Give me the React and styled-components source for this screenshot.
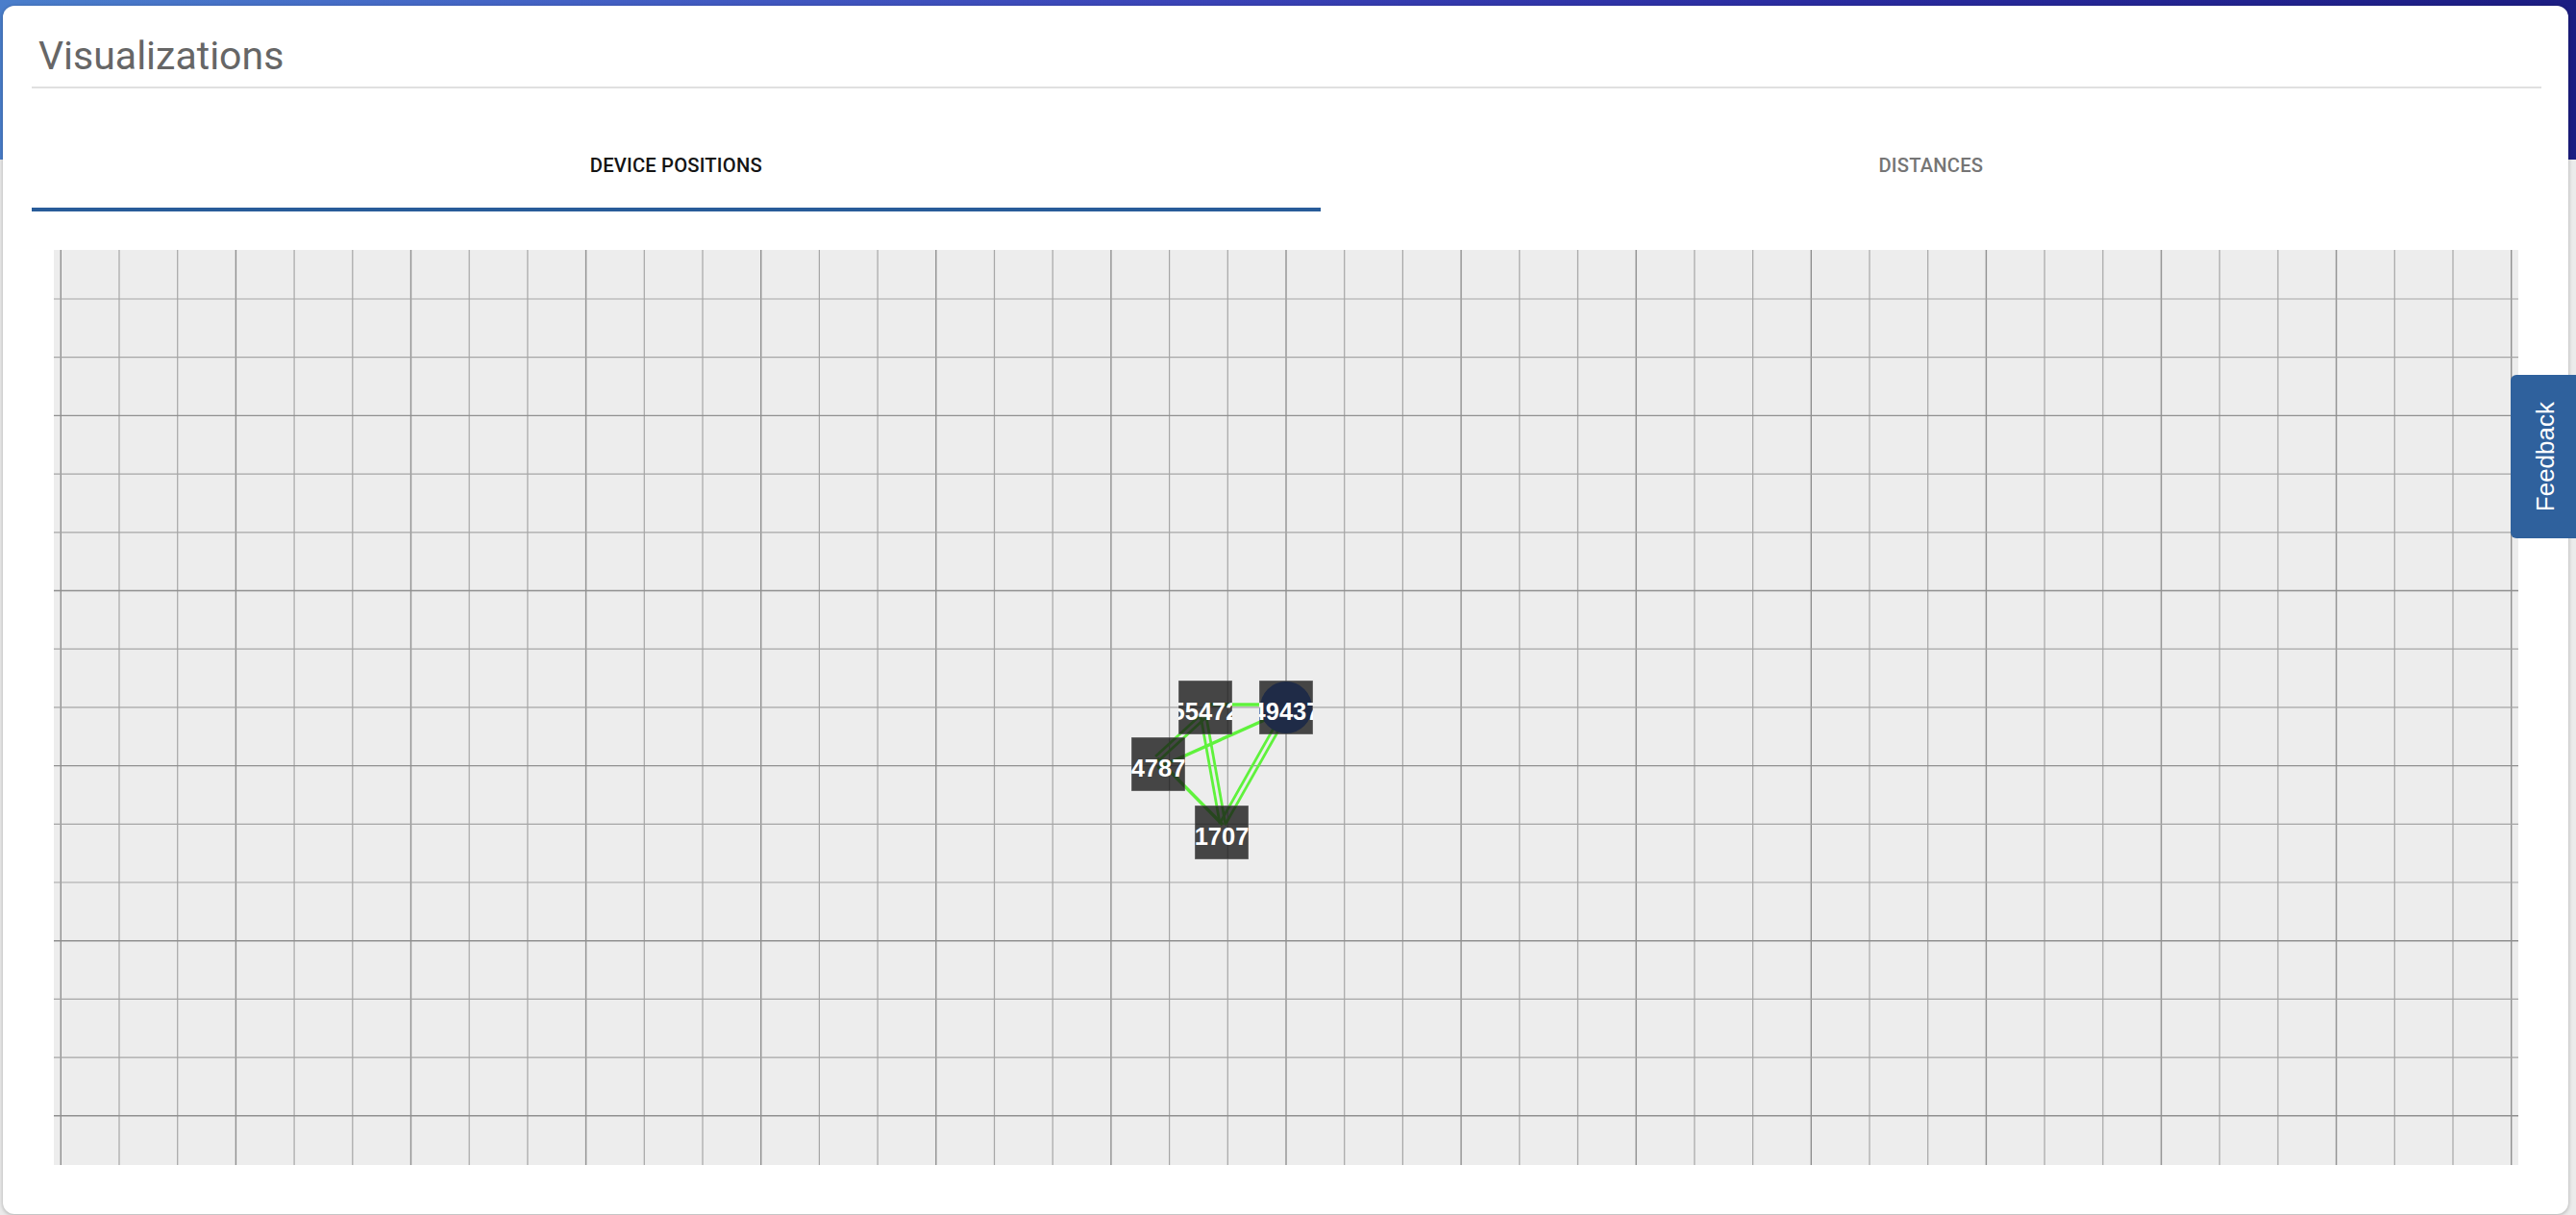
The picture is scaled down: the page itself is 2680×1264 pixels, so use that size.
import React from "react";
import styled, { createGlobalStyle } from "styled-components";

const GlobalStyle = createGlobalStyle`
  html, body {
    margin: 0;
    padding: 0;
    height: 100%;
    overflow: hidden;
  }
  body {
    font-family: Roboto, "Liberation Sans", Arial, sans-serif;
    background:
      linear-gradient(90deg, #4a7ecb 0%, #4361c4 22%, #3b45b8 45%, #2a2ca0 70%, #1c1d82 100%) top left / 100% 166px no-repeat,
      #ebebeb;
  }
  #root { height: 100%; }
`;

const Page = styled.div`
  height: 100%;
  display: flex;
  flex-direction: column;
`;

const Card = styled.section`
  margin: 6px 8px 0 3px;
  height: 1257px;
  box-sizing: border-box;
  padding: 29px 28px 0 30px;
  background: #fff;
  border-radius: 12px;
  box-shadow: 0 1px 4px rgba(0, 0, 0, 0.28);
  display: flex;
  flex-direction: column;
`;

const Title = styled.h1`
  margin: 0;
  padding-left: 7px;
  font-family: Roboto, "Liberation Sans", sans-serif;
  font-weight: 400;
  font-size: 41px;
  line-height: 47px;
  color: #666;
`;

const Divider = styled.div`
  height: 2px;
  margin-top: 8px;
  background: #e0e0e0;
`;

const TabBar = styled.div`
  display: flex;
  margin-top: 32px;
`;

const Tab = styled.button`
  flex: 1 1 auto;
  height: 96px;
  box-sizing: border-box;
  padding: 4px 0 0;
  margin: 0;
  border: none;
  border-bottom: 4px solid ${(p) => (p.$active ? "#285c99" : "transparent")};
  background: transparent;
  font-family: Roboto, "Liberation Sans", sans-serif;
  font-weight: 500;
  font-size: 20.2px;
  letter-spacing: 0.2px;
  text-transform: uppercase;
  color: ${(p) => (p.$active ? "#141414" : "#757575")};
  cursor: pointer;
`;

const Canvas = styled.div`
  height: 952px;
  margin: 40px 24px 0 23px;
  background: #ededed;
  position: relative;
  overflow: hidden;
`;

const Drawing = styled.svg`
  display: block;
  width: 100%;
  height: 100%;
`;

const FeedbackTab = styled.button`
  position: fixed;
  right: 0;
  top: 390px;
  width: 68px;
  height: 170px;
  border: none;
  padding: 0 0 0 4px;
  border-radius: 6px 0 0 6px;
  background: #2f619d;
  color: #fff;
  font-family: "Liberation Sans", Arial, sans-serif;
  font-size: 26px;
  display: flex;
  align-items: center;
  justify-content: center;
  cursor: pointer;
`;

const FeedbackLabel = styled.span`
  writing-mode: vertical-rl;
  transform: rotate(180deg);
  line-height: 1;
`;

const STEP = 60.7;
const X0 = 7.3;
const Y0 = 51;
const W = 2564;
const H = 952;

const GREEN = "#5ff23c";

const nodes = [
  { id: "55472", x: 1170, y: 448 },
  { id: "49437", x: 1254, y: 448, circle: true },
  { id: "4787", x: 1121, y: 507 },
  { id: "1707", x: 1187, y: 578 },
];

const edges = [
  { a: [1198, 473], b: [1282, 473], double: false },
  { a: [1196, 485], b: [1148, 529], double: true },
  { a: [1196, 485], b: [1216, 597], double: true },
  { a: [1282, 479], b: [1148, 539], double: false },
  { a: [1281, 482], b: [1216, 597], double: true },
  { a: [1148, 529], b: [1216, 598], double: false },
];

function Grid() {
  const lines = [];
  for (let k = 0; X0 + k * STEP < W; k++) {
    const x = X0 + k * STEP;
    const major = k % 3 === 0;
    lines.push(
      <line
        key={"v" + k}
        x1={x}
        x2={x}
        y1={0}
        y2={H}
        stroke={major ? "#909090" : "#a6a6a6"}
        strokeWidth={major ? 1.4 : 1.2}
      />
    );
  }
  for (let k = 0; Y0 + k * STEP < H; k++) {
    const y = Y0 + k * STEP;
    const major = k % 3 === 2;
    lines.push(
      <line
        key={"h" + k}
        x1={0}
        x2={W}
        y1={y}
        y2={y}
        stroke={major ? "#909090" : "#a6a6a6"}
        strokeWidth={major ? 1.4 : 1.2}
      />
    );
  }
  return <g>{lines}</g>;
}

function Edge({ a, b, double }) {
  if (!double) {
    return <line x1={a[0]} y1={a[1]} x2={b[0]} y2={b[1]} stroke={GREEN} strokeWidth={3.4} />;
  }
  const dx = b[0] - a[0];
  const dy = b[1] - a[1];
  const len = Math.hypot(dx, dy);
  const nx = (-dy / len) * 2.8;
  const ny = (dx / len) * 2.8;
  return (
    <g stroke={GREEN} strokeWidth={2.8}>
      <line x1={a[0] + nx} y1={a[1] + ny} x2={b[0] + nx} y2={b[1] + ny} />
      <line x1={a[0] - nx} y1={a[1] - ny} x2={b[0] - nx} y2={b[1] - ny} />
    </g>
  );
}

function Node({ id, x, y, circle }) {
  return (
    <svg x={x} y={y} width={56} height={56} overflow="hidden">
      <rect x={0} y={0} width={56} height={56} fill="rgba(22,22,22,0.78)" stroke="rgba(255,255,255,0.35)" strokeWidth={1} />
      {circle && <circle cx={28} cy={28} r={27} fill="#1f2b47" />}
      <text
        x={28}
        y={40.5}
        textAnchor="middle"
        fill="#fff"
        fontFamily="'Liberation Sans', Arial, sans-serif"
        fontWeight="700"
        fontSize={25.5}
      >
        {id}
      </text>
    </svg>
  );
}

export default function App() {
  return (
    <Page>
      <GlobalStyle />
      <Card>
        <Title>Visualizations</Title>
        <Divider />
        <TabBar>
          <Tab $active>Device Positions</Tab>
          <Tab>Distances</Tab>
        </TabBar>
        <Canvas>
          <Drawing>
            <Grid />
            {edges.map((e, i) => (
              <Edge key={i} {...e} />
            ))}
            {nodes.map((n) => (
              <Node key={n.id} {...n} />
            ))}
          </Drawing>
        </Canvas>
      </Card>
      <FeedbackTab>
        <FeedbackLabel>Feedback</FeedbackLabel>
      </FeedbackTab>
    </Page>
  );
}
